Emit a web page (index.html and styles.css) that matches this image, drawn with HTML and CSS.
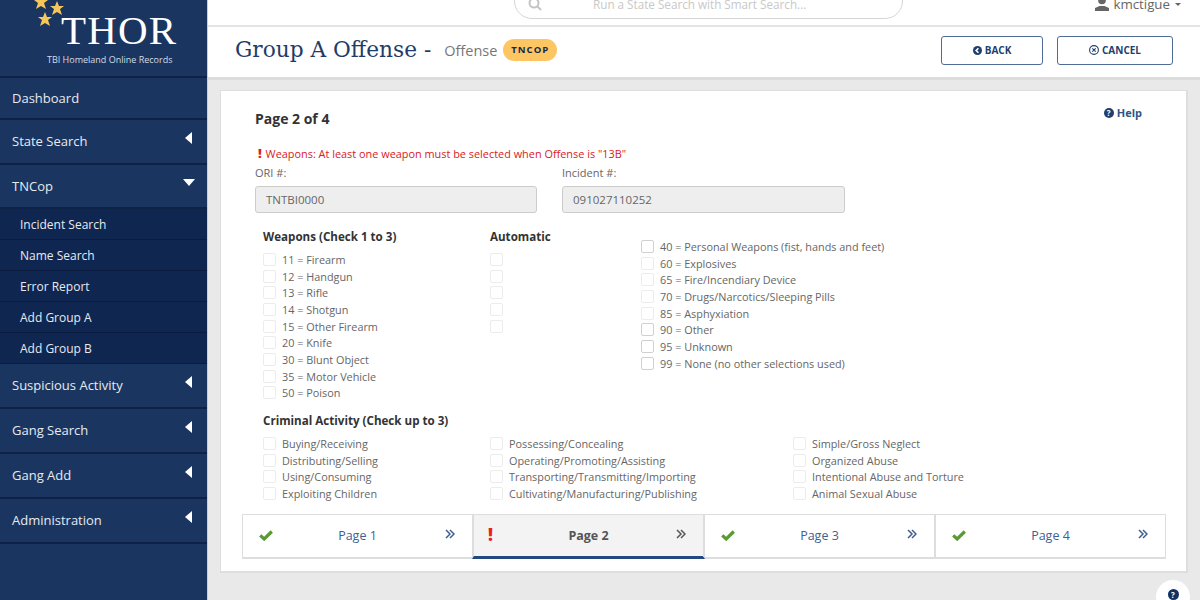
FILE: index.html
```html
<!DOCTYPE html>
<html lang="en">
<head>
  <meta charset="UTF-8" />
  <title>THOR - Group A Offense</title>
  <link rel="stylesheet" href="styles.css">
</head>
<body>
  <div class="app">
    <nav class="sidebar">
      <div class="logo">
        <svg class="stars" width="32" height="27" viewBox="0 0 32 27">
          <polygon fill="#f7c65b" points="7,-5 9,0 14,0 10,3 12,9 7,6 2,9 4,3 0,0 5,0" />
          <polygon fill="#f7c65b" points="23,1 25,6 30,6 26,9 28,15 23,12 18,15 20,9 16,6 21,6" />
          <polygon fill="#f7c65b" points="11,12 13,17 18,17 14,20 16,26 11,23 6,26 8,20 4,17 9,17" />
        </svg>
        <div class="logo-name">THOR</div>
        <div class="logo-sub">TBI Homeland Online Records</div>
      </div>
      <a class="nav-item nav-first">Dashboard</a>
      <a class="nav-item">State Search <span class="arrow-left"></span></a>
      <a class="nav-item nav-open">TNCop <span class="arrow-down"></span></a>
      <div class="subnav">
        <a>Incident Search</a>
        <a>Name Search</a>
        <a>Error Report</a>
        <a>Add Group A</a>
        <a>Add Group B</a>
      </div>
      <a class="nav-item">Suspicious Activity <span class="arrow-left"></span></a>
      <a class="nav-item">Gang Search <span class="arrow-left"></span></a>
      <a class="nav-item">Gang Add <span class="arrow-left"></span></a>
      <a class="nav-item">Administration <span class="arrow-left"></span></a>
    </nav>

    <div class="main">
      <div class="topbar">
        <div class="search">
          <svg width="14" height="14" viewBox="0 0 14 14" fill="none" stroke="#c4c4c4" stroke-width="2"><circle cx="6" cy="6" r="4.500" /><line x1="9.500" y1="9.500" x2="13" y2="13" /></svg>
          <span>Run a State Search with Smart Search...</span>
        </div>
        <div class="user">
          <svg width="14" height="14" viewBox="0 0 14 14" fill="#666"><circle cx="7" cy="3.500" r="3.800" /><path d="M0 14v-3l4.500-2h5l4.500 2v3z" /></svg>
          kmctigue <span class="caret"></span>
        </div>
      </div>

      <header class="titlebar">
        <h1>Group A Offense -</h1>
        <span class="subtitle">Offense</span>
        <span class="badge">TNCOP</span>
        <div class="actions">
          <button class="btn btn-back">
            <svg width="9" height="9" viewBox="0 0 10 10"><circle cx="5" cy="5" r="5" fill="#1f3f70" /><path d="M6 2.500 3.500 5 6 7.500" fill="none" stroke="#fff" stroke-width="1.800" /></svg>
            BACK
          </button>
          <button class="btn btn-cancel">
            <svg width="10" height="10" viewBox="0 0 10 10" fill="none" stroke="#1f3f70" stroke-width="1.100"><circle cx="5" cy="5" r="4.400" /><path d="M3.300 3.300l3.400 3.400M6.700 3.300l-3.400 3.400" /></svg>
            CANCEL
          </button>
        </div>
      </header>

      <section class="card">
        <div class="card-head">
          <h2>Page 2 of 4</h2>
          <a class="help"><span class="help-icon">?</span> Help</a>
        </div>
        <p class="error"><b>!</b> Weapons: At least one weapon must be selected when Offense is "13B"</p>

        <div class="fields">
          <div class="field field-ori">
            <label>ORI #:</label>
            <div class="input">TNTBI0000</div>
          </div>
          <div class="field field-incident">
            <label>Incident #:</label>
            <div class="input">091027110252</div>
          </div>
        </div>

        <div class="weapons">
          <div class="col-weapons">
            <h3>Weapons (Check 1 to 3)</h3>
            <div class="check"><i></i>11 = Firearm</div>
            <div class="check"><i></i>12 = Handgun</div>
            <div class="check"><i></i>13 = Rifle</div>
            <div class="check"><i></i>14 = Shotgun</div>
            <div class="check"><i></i>15 = Other Firearm</div>
            <div class="check"><i></i>20 = Knife</div>
            <div class="check"><i></i>30 = Blunt Object</div>
            <div class="check"><i></i>35 = Motor Vehicle</div>
            <div class="check"><i></i>50 = Poison</div>
          </div>
          <div class="col-auto">
            <h3>Automatic</h3>
            <div class="check"><i></i></div>
            <div class="check"><i></i></div>
            <div class="check"><i></i></div>
            <div class="check"><i></i></div>
            <div class="check"><i></i></div>
          </div>
          <div class="col-other">
            <div class="check"><i class="dark"></i>40 = Personal Weapons (fist, hands and feet)</div>
            <div class="check"><i></i>60 = Explosives</div>
            <div class="check"><i></i>65 = Fire/Incendiary Device</div>
            <div class="check"><i></i>70 = Drugs/Narcotics/Sleeping Pills</div>
            <div class="check"><i></i>85 = Asphyxiation</div>
            <div class="check"><i class="dark"></i>90 = Other</div>
            <div class="check"><i class="dark"></i>95 = Unknown</div>
            <div class="check"><i class="dark"></i>99 = None (no other selections used)</div>
          </div>
        </div>

        <h3 class="activity-title">Criminal Activity (Check up to 3)</h3>
        <div class="activity">
          <div class="check"><i></i>Buying/Receiving</div>
          <div class="check"><i></i>Possessing/Concealing</div>
          <div class="check"><i></i>Simple/Gross Neglect</div>
          <div class="check"><i></i>Distributing/Selling</div>
          <div class="check"><i></i>Operating/Promoting/Assisting</div>
          <div class="check"><i></i>Organized Abuse</div>
          <div class="check"><i></i>Using/Consuming</div>
          <div class="check"><i></i>Transporting/Transmitting/Importing</div>
          <div class="check"><i></i>Intentional Abuse and Torture</div>
          <div class="check"><i></i>Exploiting Children</div>
          <div class="check"><i></i>Cultivating/Manufacturing/Publishing</div>
          <div class="check"><i></i>Animal Sexual Abuse</div>
        </div>

        <div class="tabs">
          <a class="tab">
            <svg class="mark" width="14" height="11" viewBox="0 0 14 11"><path d="M1.200 5.300 5.200 9 12.800 1.500" fill="none" stroke="#5a9a33" stroke-width="3.200" /></svg>
            <span>Page 1</span>
            <svg class="chev" width="10" height="10" viewBox="0 0 10 10" fill="none" stroke="currentColor" stroke-width="1.500"><path d="M1 1l4 4-4 4M5 1l4 4-4 4" /></svg>
          </a>
          <a class="tab tab-active">
            <span class="mark mark-err">!</span>
            <span>Page 2</span>
            <svg class="chev" width="10" height="10" viewBox="0 0 10 10" fill="none" stroke="currentColor" stroke-width="1.500"><path d="M1 1l4 4-4 4M5 1l4 4-4 4" /></svg>
          </a>
          <a class="tab">
            <svg class="mark" width="14" height="11" viewBox="0 0 14 11"><path d="M1.200 5.300 5.200 9 12.800 1.500" fill="none" stroke="#5a9a33" stroke-width="3.200" /></svg>
            <span>Page 3</span>
            <svg class="chev" width="10" height="10" viewBox="0 0 10 10" fill="none" stroke="currentColor" stroke-width="1.500"><path d="M1 1l4 4-4 4M5 1l4 4-4 4" /></svg>
          </a>
          <a class="tab">
            <svg class="mark" width="14" height="11" viewBox="0 0 14 11"><path d="M1.200 5.300 5.200 9 12.800 1.500" fill="none" stroke="#5a9a33" stroke-width="3.200" /></svg>
            <span>Page 4</span>
            <svg class="chev" width="10" height="10" viewBox="0 0 10 10" fill="none" stroke="currentColor" stroke-width="1.500"><path d="M1 1l4 4-4 4M5 1l4 4-4 4" /></svg>
          </a>
        </div>
      </section>
      <div class="float-help"><span class="help-icon">?</span></div>
    </div>
  </div>
</body>
</html>
```

FILE: styles.css
```css
* { box-sizing: border-box; }
html, body { height: 100%; }
body { margin: 0; overflow: hidden; font-family: "Open Sans", sans-serif; color: #555; background: #e9e9e9; }
.app { display: flex; height: 600px; }

.sidebar { width: 208px; flex-shrink: 0; background: #1a3660; border-right: 1px solid #c9ced6; color: #e6eaf0; }
.logo { height: 78px; position: relative; text-align: center; border-bottom: 2px solid #0e2248; }
.stars { position: absolute; left: 34px; top: 0; }
.logo-name { position: absolute; left: 61px; top: 8px; font-family: "Liberation Serif", serif; font-size: 41px; line-height: 44px; color: #fff; letter-spacing: 1.200px; }
.logo-sub { position: absolute; left: 47px; top: 53px; font-size: 9px; line-height: 14px; color: #d5dbe5; white-space: nowrap; }
.nav-item { display: flex; justify-content: space-between; align-items: center; height: 45px; padding: 0 15px 1px 12px; font-size: 13px; border-bottom: 2px solid #0e2248; }
.nav-first { height: 42px; }
.nav-open { height: 44px; }
.arrow-left { width: 0; height: 0; border-style: solid; border-width: 6.500px 7px 6.500px 0; border-color: transparent #fff transparent transparent; margin-top: -6px; }
.arrow-down { width: 0; height: 0; border-style: solid; border-width: 7px 6.500px 0 6.500px; border-color: #fff transparent transparent transparent; margin: -6px -3px 0 0; }
.subnav { background: #0f2650; }
.subnav a { display: flex; align-items: center; height: 31px; padding-left: 20px; font-size: 12px; border-bottom: 1px solid #0a1c40; }

.main { flex: 1; position: relative; min-width: 0; }
.topbar { height: 27px; background: #fff; border-bottom: 2px solid #e4e4e4; position: relative; }
.search { position: absolute; left: 306px; top: -17px; width: 389px; height: 36px; border: 1px solid #d5d5d5; border-radius: 18px; display: flex; align-items: center; padding: 6px 0 0 13px; font-size: 11.700px; color: #c8c8c8; }
.search span { margin-left: 51px; }
.user { position: absolute; right: 19px; top: -5px; font-size: 13.300px; color: #666; display: flex; align-items: center; gap: 4px; }
.caret { width: 0; height: 0; border-style: solid; border-width: 3.500px 3.500px 0 3.500px; border-color: #666 transparent transparent transparent; margin-left: 1px; }

.titlebar { background: #fff; display: flex; align-items: center; padding: 0 27px 4px 27px; border-bottom: 3px solid #dcdcdc; height: 53px; }
.titlebar h1 { margin: -2px 0 0; font-family: "DejaVu Serif", serif; font-weight: 400; font-size: 21.700px; color: #1f3c68; white-space: nowrap; }
.subtitle { margin-left: 13px; font-size: 14.500px; color: #777; }
.badge { margin-left: 6px; background: #fdc663; color: #14284d; font-size: 9.500px; font-weight: 700; letter-spacing: 1px; padding: 0 8px; height: 22px; line-height: 22px; border-radius: 11px; }
.actions { margin-left: auto; display: flex; gap: 14px; }
.btn { height: 29px; background: #fff; border: 1px solid #4f6c95; border-radius: 3px; font-family: "Open Sans", sans-serif; font-weight: 700; font-size: 10px; color: #1f3f70; display: flex; align-items: center; justify-content: center; gap: 3px; }
.btn-back { width: 102px; }
.btn-cancel { width: 116px; }

.card { position: absolute; left: 12px; top: 90px; width: 968px; height: 483px; background: #fff; border: 1px solid #dedede; border-right-width: 2px; border-bottom-width: 2px; padding: 18px 21px 0 34px; }
.card-head { display: flex; justify-content: space-between; align-items: flex-start; padding-right: 23px; }
.card-head h2 { margin: 0; font-size: 14px; line-height: 19px; font-weight: 700; color: #333; }
.help { font-size: 11px; font-weight: 700; color: #2f5486; display: flex; align-items: center; gap: 3px; margin-top: -4px; }
.help-icon { display: inline-block; width: 10px; height: 10px; border-radius: 50%; background: #1f3f70; color: #fff; font-size: 8px; line-height: 10px; font-weight: 700; text-align: center; }
.error { margin: 18px 0 0; font-size: 10.900px; line-height: 15px; color: #d9201f; }
.error b { font-size: 13px; font-weight: 800; margin: 0 1px 0 3px; line-height: 13px; }

.fields { display: flex; margin-top: 4px; }
.field label { display: block; font-size: 11px; line-height: 15px; color: #666; }
.input { margin-top: 6px; height: 27px; background: #eee; border: 1px solid #ccc; border-radius: 3px; font-size: 11.500px; line-height: 25px; padding-left: 10px; color: #666; }
.field-ori { width: 282px; }
.field-incident { width: 283px; margin-left: 25px; }

h3 { margin: 0; font-size: 11.600px; line-height: 16px; font-weight: 700; color: #333; }
.weapons { display: flex; margin-top: 16px; padding-left: 8px; }
.col-weapons { width: 227px; }
.col-auto { width: 151px; }
.col-other { margin-top: 3px; padding-top: 6px; }
.col-weapons h3, .col-auto h3 { margin-bottom: 6px; }
.check { display: flex; align-items: center; height: 16.700px; font-size: 10.850px; color: #666; white-space: nowrap; }
.check i { width: 13px; height: 13px; border: 1px solid #ececec; border-radius: 2px; margin-right: 6px; flex-shrink: 0; }
.check i.dark { border-color: #d0d0d0; }
.activity-title { margin: 12px 0 0 8px; }
.activity { display: grid; grid-template-columns: 227px 303px 1fr; margin: 6px 0 0 8px; }

.tabs { display: flex; margin: 12px 0 0 -13px; width: 924px; height: 45px; border: 1px solid #ddd; border-bottom-width: 2px; }
.tab { flex: 1; position: relative; display: flex; align-items: center; justify-content: center; font-size: 12.500px; color: #3f5f92; border-left: 2px solid #ddd; }
.tab:first-child { border-left: 0; }
.tab-active { background: #f3f3f3; color: #555; font-weight: 700; border-right: 2px solid #ddd; border-bottom: 3px solid #23477f; margin-bottom: -2px; margin-right: -2px; }
.mark { position: absolute; left: 16px; top: 15px; }
.mark-err { left: 14px; top: 9px; font-size: 17px; line-height: 22px; font-weight: 800; color: #e82121; }
.chev { position: absolute; right: 17px; top: 14px; }

.float-help { position: absolute; right: 10px; top: 580px; width: 34px; height: 34px; background: #fff; border-radius: 50%; display: flex; justify-content: center; padding-top: 9px; }
.float-help .help-icon { width: 11px; height: 11px; line-height: 11px; background: #14305e; }
```
